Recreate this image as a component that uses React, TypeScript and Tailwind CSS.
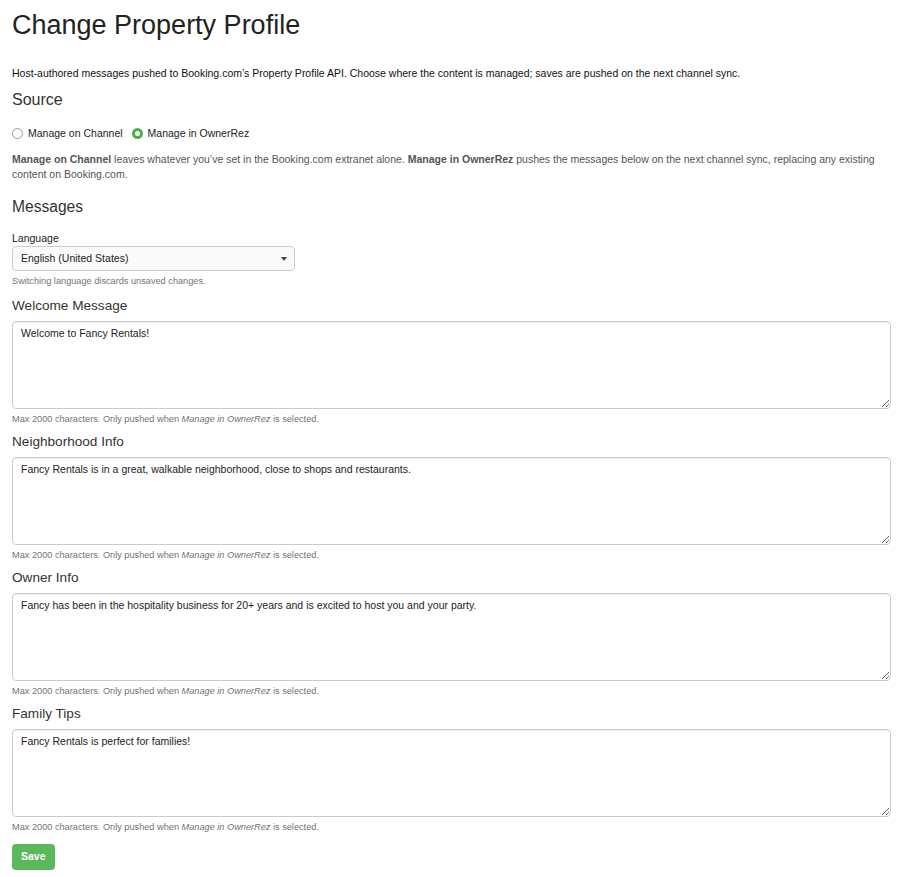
import { ReactNode } from 'react'

const font = { fontFamily: '"Liberation Sans", Arial, sans-serif' }

function Help({ children }: { children: ReactNode }) {
  return <p className="mt-[4px] text-[9.2px] leading-[12px] text-[#737373]">{children}</p>
}

function MessageField({ label, value, first }: { label: string; value: string; first?: boolean }) {
  return (
    <div className={first ? 'mt-[10px]' : 'mt-[8px]'}>
      <h4 className="text-[13.6px] leading-[18px] text-[#333]">{label}</h4>
      <textarea
        className="mt-[6px] block h-[88px] w-full rounded-[4px] border border-[#ccc] bg-white px-[8px] py-[4px] text-[10.5px] leading-[15px] text-[#222] shadow-[inset_0_1px_1px_rgba(0,0,0,0.075)] outline-none"
        defaultValue={value}
      />
      <Help>
        Max 2000 characters. Only pushed when <em>Manage in OwnerRez</em> is selected.
      </Help>
    </div>
  )
}

export default function App() {
  return (
    <div style={font} className="min-h-screen bg-white pl-[12px] pr-[8px] pt-[9px] pb-[8px] text-[#333]">
      <h1 className="text-[27px] leading-[32px] font-normal text-[#222]">Change Property Profile</h1>

      <p className="mt-[24px] text-[10.5px] leading-[16px] text-[#111]">
        Host-authored messages pushed to Booking.com’s Property Profile API. Choose where the content is managed; saves are pushed on the next channel sync.
      </p>

      <h3 className="mt-[9px] text-[16px] leading-[20px] text-[#333]">Source</h3>

      <div className="mt-[16px] flex items-center gap-[9px] text-[10.5px] leading-[14px] text-[#222]">
        <label className="flex items-center gap-[5px]">
          <span className="inline-block h-[11px] w-[11px] rounded-full border border-[#9a9a9a] bg-white" />
          Manage on Channel
        </label>
        <label className="flex items-center gap-[5px]">
          <span className="inline-block h-[11px] w-[11px] rounded-full border-[3px] border-[#4cae4c] bg-white" />
          Manage in OwnerRez
        </label>
      </div>

      <p className="mt-[12px] text-[10.5px] leading-[15px] text-[#555]">
        <strong className="font-bold">Manage on Channel</strong> leaves whatever you’ve set in the Booking.com extranet alone.{' '}
        <strong className="font-bold">Manage in OwnerRez</strong> pushes the messages below on the next channel sync, replacing any existing content on Booking.com.
      </p>

      <h3 className="mt-[15px] text-[15.6px] leading-[20px] text-[#333]">Messages</h3>

      <div className="mt-[14px]">
        <label className="block text-[10.5px] leading-[14px] text-[#222]">Language</label>
        <div className="relative mt-[1px] w-[283px]">
          <div className="flex h-[25px] items-center rounded-[4px] border border-[#ccc] bg-[#fafafa] px-[8px] text-[10.5px] text-[#222]">
            English (United States)
          </div>
          <span className="absolute right-[8px] top-[11px] h-0 w-0 border-x-[3px] border-t-[4px] border-x-transparent border-t-[#444]" />
        </div>
        <Help>Switching language discards unsaved changes.</Help>
      </div>

      <MessageField first label="Welcome Message" value="Welcome to Fancy Rentals!" />
      <MessageField
        label="Neighborhood Info"
        value="Fancy Rentals is in a great, walkable neighborhood, close to shops and restaurants."
      />
      <MessageField
        label="Owner Info"
        value="Fancy has been in the hospitality business for 20+ years and is excited to host you and your party."
      />
      <MessageField label="Family Tips" value="Fancy Rentals is perfect for families!" />

      <button className="mt-[11px] h-[26px] rounded-[4px] bg-[#5cb85c] px-[9px] text-[10.5px] font-bold text-white">
        Save
      </button>
    </div>
  )
}
